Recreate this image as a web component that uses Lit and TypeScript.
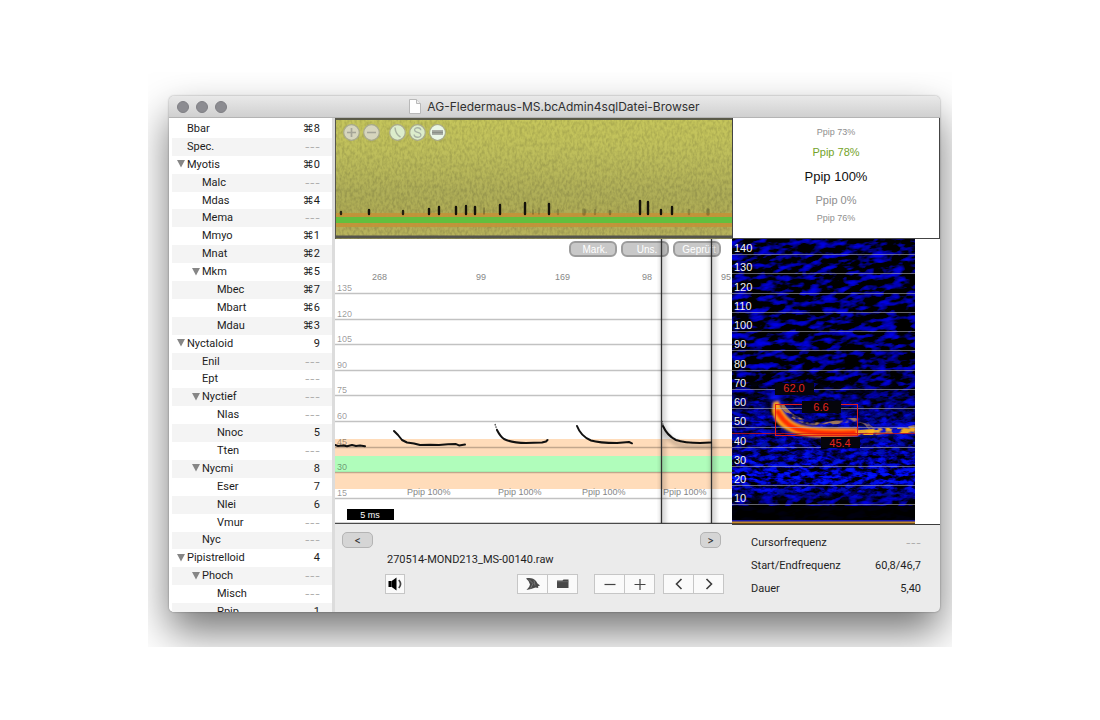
import { LitElement, html, svg, css } from "lit";
import { customElement } from "lit/decorators.js";

interface Taxon {
  name: string;
  key: string;
  level: number;
  open?: boolean;
}

const NONE = "---";

const TAXA: Taxon[] = [
  { name: "Bbar", key: "⌘8", level: 0 },
  { name: "Spec.", key: NONE, level: 0 },
  { name: "Myotis", key: "⌘0", level: 0, open: true },
  { name: "Malc", key: NONE, level: 1 },
  { name: "Mdas", key: "⌘4", level: 1 },
  { name: "Mema", key: NONE, level: 1 },
  { name: "Mmyo", key: "⌘1", level: 1 },
  { name: "Mnat", key: "⌘2", level: 1 },
  { name: "Mkm", key: "⌘5", level: 1, open: true },
  { name: "Mbec", key: "⌘7", level: 2 },
  { name: "Mbart", key: "⌘6", level: 2 },
  { name: "Mdau", key: "⌘3", level: 2 },
  { name: "Nyctaloid", key: "9", level: 0, open: true },
  { name: "Enil", key: NONE, level: 1 },
  { name: "Ept", key: NONE, level: 1 },
  { name: "Nyctief", key: NONE, level: 1, open: true },
  { name: "Nlas", key: NONE, level: 2 },
  { name: "Nnoc", key: "5", level: 2 },
  { name: "Tten", key: NONE, level: 2 },
  { name: "Nycmi", key: "8", level: 1, open: true },
  { name: "Eser", key: "7", level: 2 },
  { name: "Nlei", key: "6", level: 2 },
  { name: "Vmur", key: NONE, level: 2 },
  { name: "Nyc", key: NONE, level: 1 },
  { name: "Pipistrelloid", key: "4", level: 0, open: true },
  { name: "Phoch", key: NONE, level: 1, open: true },
  { name: "Misch", key: NONE, level: 2 },
  { name: "Ppip", key: "1", level: 2 },
];

@customElement("species-list")
export class SpeciesList extends LitElement {
  static styles = css`
    :host {
      display: block;
      min-height: 0;
      overflow: hidden;
      background: #fff;
      padding: 2px 0 0 3px;
    }
    .list {
      list-style: none;
      margin: 0;
      padding: 0;
      display: grid;
      grid-auto-rows: minmax(0, 1fr);
      height: calc(100% + 9px);
    }
    .row {
      display: flex;
      align-items: center;
      padding: 0 12px 0 4px;
      font-size: 11px;
      line-height: 16px;
      color: #1c1c1c;
    }
    .row:nth-child(even) {
      background: #f4f4f4;
    }
    .level1 {
      padding-left: 19px;
    }
    .level2 {
      padding-left: 34px;
    }
    .twisty {
      flex: none;
      width: 11px;
      height: 12px;
      border: 0;
      padding: 0;
      background: none;
      display: flex;
      align-items: center;
    }
    .name {
      flex: 1;
    }
    .none {
      color: #adadad;
      font-family: Inter, sans-serif;
    }
  `;

  render() {
    return html`<ul class="list" aria-label="Arten">
      ${TAXA.map(
        (t) => html`<li class="row level${t.level}">
          ${t.open
            ? html`<button class="twisty" aria-expanded="true" aria-label=${t.name}>
                <svg width="10" height="9" viewBox="0 0 10 9"><path d="M1 0h8L5 7.500z" fill="#868686" /></svg>
              </button>`
            : html`<span class="twisty"></span>`}
          <span class="name">${t.name}</span>
          <span class=${t.key === NONE ? "none" : "key"}>${t.key}</span>
        </li>`
      )}
    </ul>`;
  }
}

/* [x, top, bottom, width, opacity] of each pulse in the overview */
const PULSES: number[][] = [
  [6, 94, 96, 3, 0.85], [34, 92, 96, 3, 1], [68, 93, 96, 3, 0.9], [94, 91, 96, 3, 1],
  [104, 89, 96, 3, 1], [121, 89, 96, 3, 1], [131, 88, 96, 3, 1], [140, 89, 96, 3, 1],
  [149, 90, 96, 2, 0.35], [165, 87, 96, 3, 1], [190, 85, 96, 3, 1], [198, 92, 96, 2, 0.35],
  [204, 90, 96, 2, 0.25], [214, 86, 96, 3, 1], [223, 92, 96, 3, 0.2], [249, 92, 96, 4, 0.25],
  [260, 92, 96, 3, 0.2], [275, 93, 96, 3, 0.3], [305, 83, 96, 3, 1], [313, 84, 96, 3, 1],
  [326, 92, 96, 3, 1], [337, 89, 96, 3, 1], [354, 92, 96, 3, 0.2], [373, 92, 96, 4, 0.25],
];

@customElement("recording-overview")
export class RecordingOverview extends LitElement {
  static styles = css`
    :host {
      display: block;
      position: relative;
      min-height: 0;
      overflow: hidden;
      background: #adad55;
    }
    .trace {
      display: block;
      width: 100%;
      height: 100%;
    }
    .tools {
      position: absolute;
      top: 6px;
      left: 8px;
      display: flex;
      gap: 3px;
    }
    .tool {
      width: 17px;
      height: 17px;
      padding: 0;
      border: 0;
      background: none;
    }
    .apart {
      margin-left: 6px;
    }
  `;

  private glyph(name: string) {
    const soft = name === "plus" || name === "minus";
    return html`<svg width="17" height="17" viewBox="0 0 17 17">
      <circle cx="8.5" cy="8.5" r="7.8" fill=${soft ? "#d6d5bd" : "#dceccb"} stroke="#a9aa8c" stroke-width="1.2" />
      ${name === "plus" ? svg`<path d="M8.5 4v9M4 8.5h9" stroke="#a5a597" stroke-width="1.7" />` : null}
      ${name === "minus" ? svg`<path d="M4 8.5h9" stroke="#a5a597" stroke-width="1.7" />` : null}
      ${name === "curve"
        ? svg`<path d="M6 3.5c.4 4.500 1.600 7.500 5.500 9.500" fill="none" stroke="#a9b3a0" stroke-width="1.5" />`
        : null}
      ${name === "loop"
        ? svg`<path d="M11.800 6.200C11.500 2.900 5.500 3 5.600 6c.1 3.200 6.300 1.600 6.300 5 0 3.200-6.700 3-6.800-.6" fill="none" stroke="#a9b3a6" stroke-width="1.3" />`
        : null}
      ${name === "bar"
        ? svg`<circle cx="8.500" cy="8.500" r="7.200" fill="#eaf6e6" /><rect x="3" y="6" width="11" height="5" fill="#a9ada5" /><path d="M3 8.500h11" stroke="#8a8f87" stroke-width="1.5" />`
        : null}
    </svg>`;
  }

  render() {
    return html`
      <svg class="trace" viewBox="0 0 397 121" preserveAspectRatio="xMidYMid slice" role="img" aria-label="Übersicht">
        <defs>
          <linearGradient id="olive" x1="0" y1="0" x2="0" y2="1">
            <stop offset="0" stop-color="#c1c15a" />
            <stop offset="0.3" stop-color="#b8b859" />
            <stop offset="0.62" stop-color="#a8a755" />
            <stop offset="0.85" stop-color="#a8a352" />
            <stop offset="1" stop-color="#b4b05c" />
          </linearGradient>
          <filter id="grain" x="0" y="0" width="100%" height="100%" color-interpolation-filters="sRGB">
            <feTurbulence type="fractalNoise" baseFrequency="0.4 0.24" numOctaves="2" seed="4" />
            <feColorMatrix values="2.4 0 0 0 -.55  2.4 0 0 0 -.55  1 0 0 0 -.2  0 0 0 0 1" />
          </filter>
        </defs>
        <rect width="397" height="121" fill="url(#olive)" />
        <rect width="397" height="121" filter="url(#grain)" opacity="0.09" />
        <rect y="95" width="397" height="14" fill="#c29238" opacity="0.92" />
        <rect y="99" width="397" height="6" fill="#62bf3e" />
        ${PULSES.map(
          ([x, top, bottom, w, o]) =>
            svg`<path d="M${x} ${top}V${bottom}" stroke="#14120a" stroke-width=${w - 0.6} stroke-linecap="round" opacity=${o} />`
        )}
        <path d="M0 1H397" stroke="#5a5a48" stroke-width="2" />
        <path d="M0 119H397" stroke="#55554c" stroke-width="3" />
        <path d="M.5 0V121" stroke="#55554c" />
      </svg>
      <div class="tools">
        <button class="tool" aria-label="Vergrößern">${this.glyph("plus")}</button>
        <button class="tool" aria-label="Verkleinern">${this.glyph("minus")}</button>
        <button class="tool apart" aria-label="Kurve">${this.glyph("curve")}</button>
        <button class="tool" aria-label="Sonagramm">${this.glyph("loop")}</button>
        <button class="tool" aria-label="Bänder">${this.glyph("bar")}</button>
      </div>
    `;
  }
}

const CALL_LEVELS: [number, number][] = [
  [135, 54], [120, 80], [105, 105], [90, 131], [75, 156], [60, 182], [45, 208], [30, 233], [15, 259],
];
const INTERVALS: [string, number][] = [["268", 37], ["99", 141], ["169", 220], ["98", 307], ["95", 386]];
const CALL_NAMES = [72, 163, 247, 328];
const CALLS = [
  "M0 206l3 1 5-.5 4 .8 5-1.300 4 1 4-.6 5 .9",
  "M59 192l4 4 4 5 5 2.500 7 1 6 1.500 10-.3 9 .2 9-.6 8-.2 3 1.300 6-.8",
  "M162 191c2 4 4 7 7 9 6 3 12 4 22 4l16-.5 4-1 1.500-1.500",
  "M242 187c3 8 8 12 14 14.500 8 2.500 16 2.500 26 2.500l12-1 3 1.300",
  "M328 187c3 7 7 11 13 14 7 2.500 14 3 24 3l11-.5",
];

@customElement("call-plot")
export class CallPlot extends LitElement {
  static styles = css`
    :host {
      display: block;
      position: relative;
      min-height: 0;
      overflow: hidden;
      background: #fff;
      font-family: "Liberation Sans", Arial, sans-serif;
    }
    .plot {
      display: block;
      width: 100%;
      height: 100%;
      font-size: 9px;
    }
    .flags {
      position: absolute;
      top: 2px;
      right: 11px;
      display: flex;
      gap: 4px;
      z-index: 0;
    }
    .flag {
      width: 48px;
      height: 16px;
      padding: 1px 0 0 4px;
      border: 2px solid #9c9c9c;
      border-radius: 6px;
      background: #c8c8c8;
      color: #fff;
      font: 10px/12px "Liberation Sans", Arial, sans-serif;
      white-space: nowrap;
    }
    .marks {
      position: absolute;
      inset: 0;
      z-index: 1;
      pointer-events: none;
    }
  `;

  render() {
    return html`
      <svg class="plot" viewBox="0 0 397 285" preserveAspectRatio="xMidYMid slice" role="img" aria-label="Rufe">
        <rect y="200" width="397" height="50" fill="#ffdcba" />
        <rect y="217" width="397" height="16" fill="#b0fdbb" />
        ${CALL_LEVELS.map(
          ([khz, y]) => svg`
            <path d="M0 ${y + 0.5}H397" stroke="#000" stroke-opacity="0.24" stroke-width="1.3" />
            <text x="2" y=${y - 2} fill="#000" fill-opacity="0.42">${khz}</text>`
        )}
        ${INTERVALS.map(([ms, x]) => svg`<text x=${x} y="41" fill="#888">${ms}</text>`)}
        ${CALL_NAMES.map((x) => svg`<text x=${x} y="256" fill="#868686">Ppip 100%</text>`)}
        <rect x="12" y="270" width="47" height="11" fill="#000" />
        <text x="35" y="279" fill="#fff" text-anchor="middle">5 ms</text>
        <path d="M0 284.500H397" stroke="#4a4a4a" stroke-width="1.3" />
      </svg>
      <div class="flags">
        <button class="flag">Mark.</button>
        <button class="flag">Uns.</button>
        <button class="flag">Geprüft</button>
      </div>
      <div class="marks">
        <svg class="plot" viewBox="0 0 397 285" preserveAspectRatio="xMidYMid slice" aria-hidden="true">
          <defs>
            <filter id="lift" x="-20%" y="-20%" width="140%" height="160%">
              <feDropShadow dx="1" dy="4" stdDeviation="2.500" flood-opacity="0.5" />
            </filter>
            <filter id="haze" x="-5%" y="-5%" width="110%" height="110%"><feGaussianBlur stdDeviation="2 0" /></filter>
          </defs>
          <g fill="#000" opacity="0.16" filter="url(#haze)">
            <rect x="325" y="-10" width="6" height="295" />
            <rect x="375" y="-10" width="6" height="295" />
          </g>
          <path d="M326.500 0V284M376.500 0V284" stroke="#303030" stroke-width="1.3" />
          <path d="M160 185l2 6M327 182l1.500 6" fill="none" stroke="#444" stroke-width="1.300" stroke-dasharray="1.500 1" />
          ${CALLS.map(
            (d, i) => svg`<path d=${d} fill="none" stroke="#111" stroke-width="2" stroke-linecap="round"
              stroke-linejoin="round" filter=${i === 4 ? "url(#lift)" : "none"} />`
          )}
        </svg>
      </div>
    `;
  }
}

const SONO_LEVELS: [number, number][] = [
  [140, 15], [130, 34], [120, 54], [110, 73], [100, 92], [90, 111], [80, 131],
  [70, 150], [60, 169], [50, 188], [40, 208], [30, 227], [20, 246], [10, 265],
];

@customElement("sono-gram")
export class SonoGram extends LitElement {
  static styles = css`
    :host {
      display: block;
      min-height: 0;
      overflow: hidden;
      background: #fff;
      font-family: "Liberation Sans", Arial, sans-serif;
    }
    .sono {
      display: block;
      width: 100%;
      height: 100%;
      font-size: 11px;
    }
  `;

  render() {
    return html`<svg class="sono" viewBox="0 0 208 286" preserveAspectRatio="xMinYMid slice" role="img" aria-label="Sonagramm">
      <defs>
        <filter id="sparse" x="0" y="0" width="100%" height="100%" color-interpolation-filters="sRGB">
          <feTurbulence type="fractalNoise" baseFrequency="0.07 0.18" numOctaves="3" seed="11" />
          <feColorMatrix values="0 0 0 0 0  0 0 0 0 0  3 0 0 0 -1.350  0 0 0 0 1" />
          <feComponentTransfer><feFuncB type="table" tableValues="0 0.42 0.66 0.8 0.9" /></feComponentTransfer>
        </filter>
        <filter id="dense" x="0" y="0" width="100%" height="100%" color-interpolation-filters="sRGB">
          <feTurbulence type="fractalNoise" baseFrequency="0.11 0.24" numOctaves="3" seed="5" />
          <feColorMatrix values="0 0 0 0 0  .4 0 0 0 -.2  3.800 0 0 0 -1.300  0 0 0 0 1" />
        </filter>
        <filter id="patchy" x="-5%" y="-50%" width="110%" height="200%" color-interpolation-filters="sRGB">
          <feTurbulence type="fractalNoise" baseFrequency="0.12 0.2" numOctaves="2" seed="8" result="n" />
          <feColorMatrix in="n" values="0 0 0 0 1  0 0 0 0 1  0 0 0 0 1  5 0 0 0 -1.900" result="holes" />
          <feComposite in="SourceGraphic" in2="holes" operator="in" />
          <feGaussianBlur stdDeviation="0.6" />
        </filter>
        <filter id="soft1" x="-20%" y="-20%" width="140%" height="140%"><feGaussianBlur stdDeviation="0.8" /></filter>
        <filter id="soft3" x="-20%" y="-40%" width="140%" height="180%"><feGaussianBlur stdDeviation="2.500" /></filter>
        <linearGradient id="depth" x1="0" y1="0" x2="0" y2="1">
          <stop offset="0" stop-color="#000" />
          <stop offset="0.5" stop-color="#000" />
          <stop offset="0.62" stop-color="#888" />
          <stop offset="0.74" stop-color="#aaa" />
          <stop offset="0.84" stop-color="#fff" />
          <stop offset="0.89" stop-color="#999" />
          <stop offset="0.92" stop-color="#000" />
        </linearGradient>
        <mask id="band"><rect width="183" height="285" fill="url(#depth)" /></mask>
        <clipPath id="area"><rect width="183" height="285" /></clipPath>
      </defs>
      <g clip-path="url(#area)">
        <rect width="183" height="285" fill="#000" />
        <g transform="rotate(-8 90 140)">
          <rect x="-40" y="-40" width="270" height="380" filter="url(#sparse)" />
        </g>
        <g mask="url(#band)"><rect width="183" height="285" filter="url(#dense)" /></g>
        <rect y="267" width="183" height="18" fill="#000" opacity="0.93" />
        <path d="M43 154c2 20 14 34 40 38 30 2 60 0 100-2" fill="none" stroke="#0a18ff" stroke-width="10" opacity="0.7" filter="url(#soft3)" />
        <path d="M50 166c8 12 20 18 40 20 22-4 35-8 44-2 6 10 20 10 49 4" fill="none" stroke="#b98a50" stroke-width="4" filter="url(#patchy)" opacity="0.85" />
        <path d="M120 194c20 0 40-4 63-3" fill="none" stroke="#f0a81c" stroke-width="6" filter="url(#patchy)" />
        <path d="M42 164l4-1c5 14 13 22 28 25 14 3 30 2 51 2v6c-22 2-40 2-53 0-19-4-29-12-31-24z" fill="#ffa81a" stroke="#ffa01a" stroke-width="2" filter="url(#soft1)" />
        <path d="M46 173c6 11 14 17 28 19 16 3 33 2 50 1.500" fill="none" stroke="#ff2c04" stroke-width="5" stroke-linecap="round" filter="url(#soft1)" />
        <path d="M124 193.500c10-.5 14-2 24-1.500" fill="none" stroke="#ffb51c" stroke-width="4" filter="url(#soft1)" />
        <path d="M0 282H183" stroke="#2222d8" stroke-width="1.500" />
        <path d="M0 283.500H183" stroke="#c58a2c" stroke-width="1.800" />
      </g>
      ${SONO_LEVELS.map(
        ([khz, y]) => svg`
          <path d="M0 ${y + 0.5}H183" stroke="#b9b9c4" stroke-opacity="0.55" stroke-width="1.200" />
          <text x="2" y=${y - 2} fill="#f2f2f2">${khz}</text>`
      )}
      <path d="M0 194.500H183" stroke="#d01818" stroke-opacity="0.75" />
      <rect x="43.500" y="165.500" width="82" height="31" fill="none" stroke="#dc1c1c" />
      <rect x="43" y="144" width="39" height="12" fill="#05050c" />
      <rect x="70" y="162" width="39" height="12" fill="#05050c" />
      <rect x="89" y="198" width="39" height="11" fill="#05050c" />
      <g fill="#e3241c" text-anchor="middle">
        <text x="62" y="153">62.0</text>
        <text x="89" y="172">6.6</text>
        <text x="108" y="208">45.4</text>
      </g>
      <path d="M0 285.500H208" stroke="#3c3c3c" />
    </svg>`;
  }
}

@customElement("app-root")
export class AppRoot extends LitElement {
  static styles = css`
    :host {
      display: flex;
      box-sizing: border-box;
      height: 100vh;
      padding: 72px 148px 73px;
      background: #fff;
      color: #1f1f1f;
      font-family: Roboto, Inter, sans-serif;
      font-size: 11px;
      line-height: 16px;
    }
    .backdrop {
      flex: 1;
      min-width: 0;
      display: flex;
      padding: 24px 12px 35px 21px;
      overflow: hidden;
    }
    .window {
      flex: 1;
      min-width: 0;
      display: flex;
      flex-direction: column;
      border-radius: 5px;
      box-shadow: 0 20px 42px rgba(0, 0, 0, 0.54), 0 0 2px rgba(0, 0, 0, 0.4);
      background: #ebebeb;
    }
    .titlebar {
      flex: none;
      height: 22px;
      box-sizing: border-box;
      display: grid;
      grid-template-columns: 60px 1fr 60px;
      align-items: center;
      padding: 0 8px;
      border-bottom: 1px solid #b4b4b4;
      border-radius: 5px 5px 0 0;
      background: linear-gradient(#e9e9e9, #d0d0d0);
    }
    .lights {
      display: flex;
      gap: 7px;
    }
    .light {
      width: 12px;
      height: 12px;
      padding: 0;
      border: 1px solid #7f7f84;
      border-radius: 50%;
      background: #8c8c91;
    }
    .title {
      margin: 0;
      display: flex;
      justify-content: center;
      align-items: center;
      gap: 6px;
      font-family: Inter, Roboto, sans-serif;
      font-size: 12px;
      font-weight: 400;
      white-space: nowrap;
      color: #303030;
    }
    .body {
      flex: 1;
      min-height: 0;
      display: grid;
      grid-template-columns: 163px 1fr 208px;
      grid-template-rows: minmax(0, 1fr);
      overflow: hidden;
      border-radius: 0 0 5px 5px;
    }
    .center,
    .side {
      min-width: 0;
      min-height: 0;
      display: grid;
      grid-template-columns: minmax(0, 1fr);
      grid-template-rows: 121px minmax(0, 1fr) 88px;
    }
    .center {
      border-left: 3px solid #dcdcdc;
    }
    .side {
      grid-template-rows: 121px minmax(0, 1fr) 87px;
    }
    .ranking {
      margin: 0;
      padding: 6px 0 0;
      border: 1px solid #444;
      border-top: 0;
      list-style: none;
      background: #fff;
      text-align: center;
      font-family: "Liberation Sans", Arial, sans-serif;
      color: #8e8e8e;
    }
    .far {
      font-size: 9px;
      line-height: 16px;
    }
    .above {
      font-size: 11px;
      line-height: 24px;
      color: #74a32a;
    }
    .best {
      font-size: 13px;
      line-height: 26px;
      color: #111;
    }
    .below {
      font-size: 11px;
      line-height: 20px;
    }
    .controls {
      padding: 8px 8px 0 7px;
    }
    .pager {
      display: flex;
      justify-content: space-between;
      padding: 0 3px 0 0;
    }
    .page {
      width: 21px;
      height: 16px;
      padding: 0;
      border: 1px solid #b4b4b4;
      border-radius: 5px;
      background: #d5d5d5;
      color: #333;
      font: 500 10px/12px Inter, Roboto, sans-serif;
    }
    .wide {
      width: 31px;
    }
    .file {
      margin: 4px 45px 6px;
    }
    .actions {
      display: flex;
      align-items: center;
      padding-left: 43px;
      gap: 8px;
    }
    .group {
      display: flex;
      border: 1px solid #c6c6c6;
      background: #fafafa;
    }
    .push {
      margin-left: auto;
    }
    .gap {
      margin-left: 8px;
    }
    .act {
      width: 29px;
      height: 18px;
      padding: 0;
      border: 0;
      background: none;
      display: flex;
      align-items: center;
      justify-content: center;
    }
    .act + .act {
      width: 30px;
      border-left: 1px solid #c6c6c6;
    }
    .sound {
      width: 18px;
    }
    .facts {
      margin: 0;
      padding: 10px 19px 0;
      display: grid;
      grid-template-columns: 1fr auto;
      align-content: start;
      row-gap: 7px;
    }
    .term {
      margin: 0;
    }
    .value {
      margin: 0;
      text-align: right;
    }
    .none {
      color: #adadad;
      font-family: Inter, sans-serif;
    }
  `;

  render() {
    return html`<main class="backdrop">
      <section class="window">
        <header class="titlebar">
          <div class="lights">
            <button class="light" aria-label="Schließen"></button>
            <button class="light" aria-label="Minimieren"></button>
            <button class="light" aria-label="Zoomen"></button>
          </div>
          <h1 class="title">
            <svg width="12" height="15" viewBox="0 0 12 15" aria-hidden="true">
              <path d="M.5.5h7l4 4v10H.5z" fill="#fff" stroke="#b9b9b9" />
              <path d="M7.500.5v4h4" fill="#eee" stroke="#b9b9b9" />
            </svg>
            AG-Fledermaus-MS.bcAdmin4sqlDatei-Browser
          </h1>
        </header>
        <div class="body">
          <species-list></species-list>
          <div class="center">
            <recording-overview></recording-overview>
            <call-plot></call-plot>
            <div class="controls">
              <div class="pager">
                <button class="page wide">&lt;</button>
                <button class="page">&gt;</button>
              </div>
              <p class="file">270514-MOND213_MS-00140.raw</p>
              <div class="actions">
                <div class="group">
                  <button class="act sound" aria-label="Abspielen">
                    <svg width="16" height="16" viewBox="0 0 16 16">
                      <path d="M1.500 5h3.200L9.500 1.500v13L4.700 11H1.500z" fill="#000" />
                      <path d="M4.500 5v6" stroke="#777" stroke-width="0.600" />
                      <path d="M11.800 4c2.100 2.400 2.100 5.600 0 8" fill="none" stroke="#444" stroke-width="1.700" />
                    </svg>
                  </button>
                </div>
                <div class="group push">
                  <button class="act" aria-label="Fledermaus">
                    <svg width="16" height="14" viewBox="0 0 16 14">
                      <path d="M1 1.500C5 .3 9 1.500 11 4l1.500 2.500L15 8.500l-2 .8.300 1.700-2.800-.5L6 12l-4.500 1 2.700-3.200L5 7.500 3.500 4z" fill="#4a4a4a" />
                      <path d="M4 2.500l4 4-2.500 5M9 3.500l1 5" fill="none" stroke="#8a8a8a" stroke-width="0.700" />
                    </svg>
                  </button>
                  <button class="act" aria-label="Ordner">
                    <svg width="14" height="12" viewBox="0 0 14 12">
                      <path d="M1 2.500h5.500l1-1h5V10H1z" fill="#484848" />
                      <path d="M1 3.700h11.500" stroke="#777" stroke-width="0.600" />
                    </svg>
                  </button>
                </div>
                <div class="group gap">
                  <button class="act" aria-label="Verkleinern">
                    <svg width="12" height="12" viewBox="0 0 12 12"><path d="M.5 6.500h11" stroke="#444" stroke-width="1.200" /></svg>
                  </button>
                  <button class="act" aria-label="Vergrößern">
                    <svg width="12" height="12" viewBox="0 0 12 12"><path d="M.5 6.500h11M6 1v11" stroke="#444" stroke-width="1.200" /></svg>
                  </button>
                </div>
                <div class="group">
                  <button class="act" aria-label="Zurück">
                    <svg width="12" height="12" viewBox="0 0 12 12"><path d="M8.500 1L3.500 6l5 5" fill="none" stroke="#3c3c3c" stroke-width="1.600" /></svg>
                  </button>
                  <button class="act" aria-label="Weiter">
                    <svg width="12" height="12" viewBox="0 0 12 12"><path d="M3.500 1l5 5-5 5" fill="none" stroke="#3c3c3c" stroke-width="1.600" /></svg>
                  </button>
                </div>
              </div>
            </div>
          </div>
          <div class="side">
            <ul class="ranking">
              <li class="far">Ppip 73%</li>
              <li class="above">Ppip 78%</li>
              <li class="best">Ppip 100%</li>
              <li class="below">Ppip 0%</li>
              <li class="far">Ppip 76%</li>
            </ul>
            <sono-gram></sono-gram>
            <dl class="facts">
              <dt class="term">Cursorfrequenz</dt>
              <dd class="value none">---</dd>
              <dt class="term">Start/Endfrequenz</dt>
              <dd class="value">60,8/46,7</dd>
              <dt class="term">Dauer</dt>
              <dd class="value">5,40</dd>
            </dl>
          </div>
        </div>
      </section>
    </main>`;
  }
}
